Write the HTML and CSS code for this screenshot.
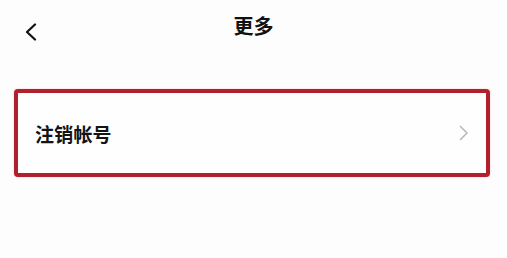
FILE: index.html
```html
<!DOCTYPE html>
<html lang="zh-CN">
<head>
<meta charset="utf-8">
<title>更多</title>
<link rel="stylesheet" href="styles.css">
</head>
<body>
<div class="page">
  <header class="topbar">
    <span class="back" aria-label="返回">
      <svg width="12" height="18" viewBox="0 0 12 18"><path d="M10 1.5 L2 9 L10 16.5" fill="none" stroke="#111" stroke-width="2.2" stroke-linecap="round" stroke-linejoin="round"/></svg>
    </span>
    <h1 class="title">更多</h1>
  </header>
  <div class="list">
    <div class="row highlight">
      <span class="label">注销帐号</span>
      <svg class="arrow" width="10" height="16" viewBox="0 0 10 16"><path d="M1.5 1.5 L8 8 L1.5 14.5" fill="none" stroke="#b8b8b8" stroke-width="1.6" stroke-linecap="round" stroke-linejoin="round"/></svg>
    </div>
  </div>
</div>
</body>
</html>
```

FILE: styles.css
```css
html, body {
  margin: 0;
  padding: 0;
  background: #fdfdfd;
}
.page {
  width: 507px;
  height: 258px;
  font-family: "Noto Sans CJK SC", "Noto Sans", sans-serif;
  color: #111;
}
.topbar {
  position: relative;
  height: 52px;
  display: flex;
  align-items: center;
  justify-content: center;
}
.back {
  position: absolute;
  left: 25px;
  top: 23px;
  width: 12px;
  height: 18px;
  display: flex;
}
.title {
  margin: 0;
  font-size: 20px;
  font-weight: 700;
  line-height: 1;
}
.list {
  padding: 37px 17px 0 14px;
}
.row {
  height: 80px;
  display: flex;
  align-items: center;
  justify-content: space-between;
  padding: 0 17px;
  background: #fefefe;
}
.highlight {
  border: 4px solid #b0202d;
  border-radius: 4px;
  box-shadow: 0 0 2px rgba(220, 60, 70, 0.35);
}
.label {
  font-size: 19px;
  font-weight: 700;
  letter-spacing: 0.2px;
  color: #141414;
}
.arrow {
  display: block;
}
```
